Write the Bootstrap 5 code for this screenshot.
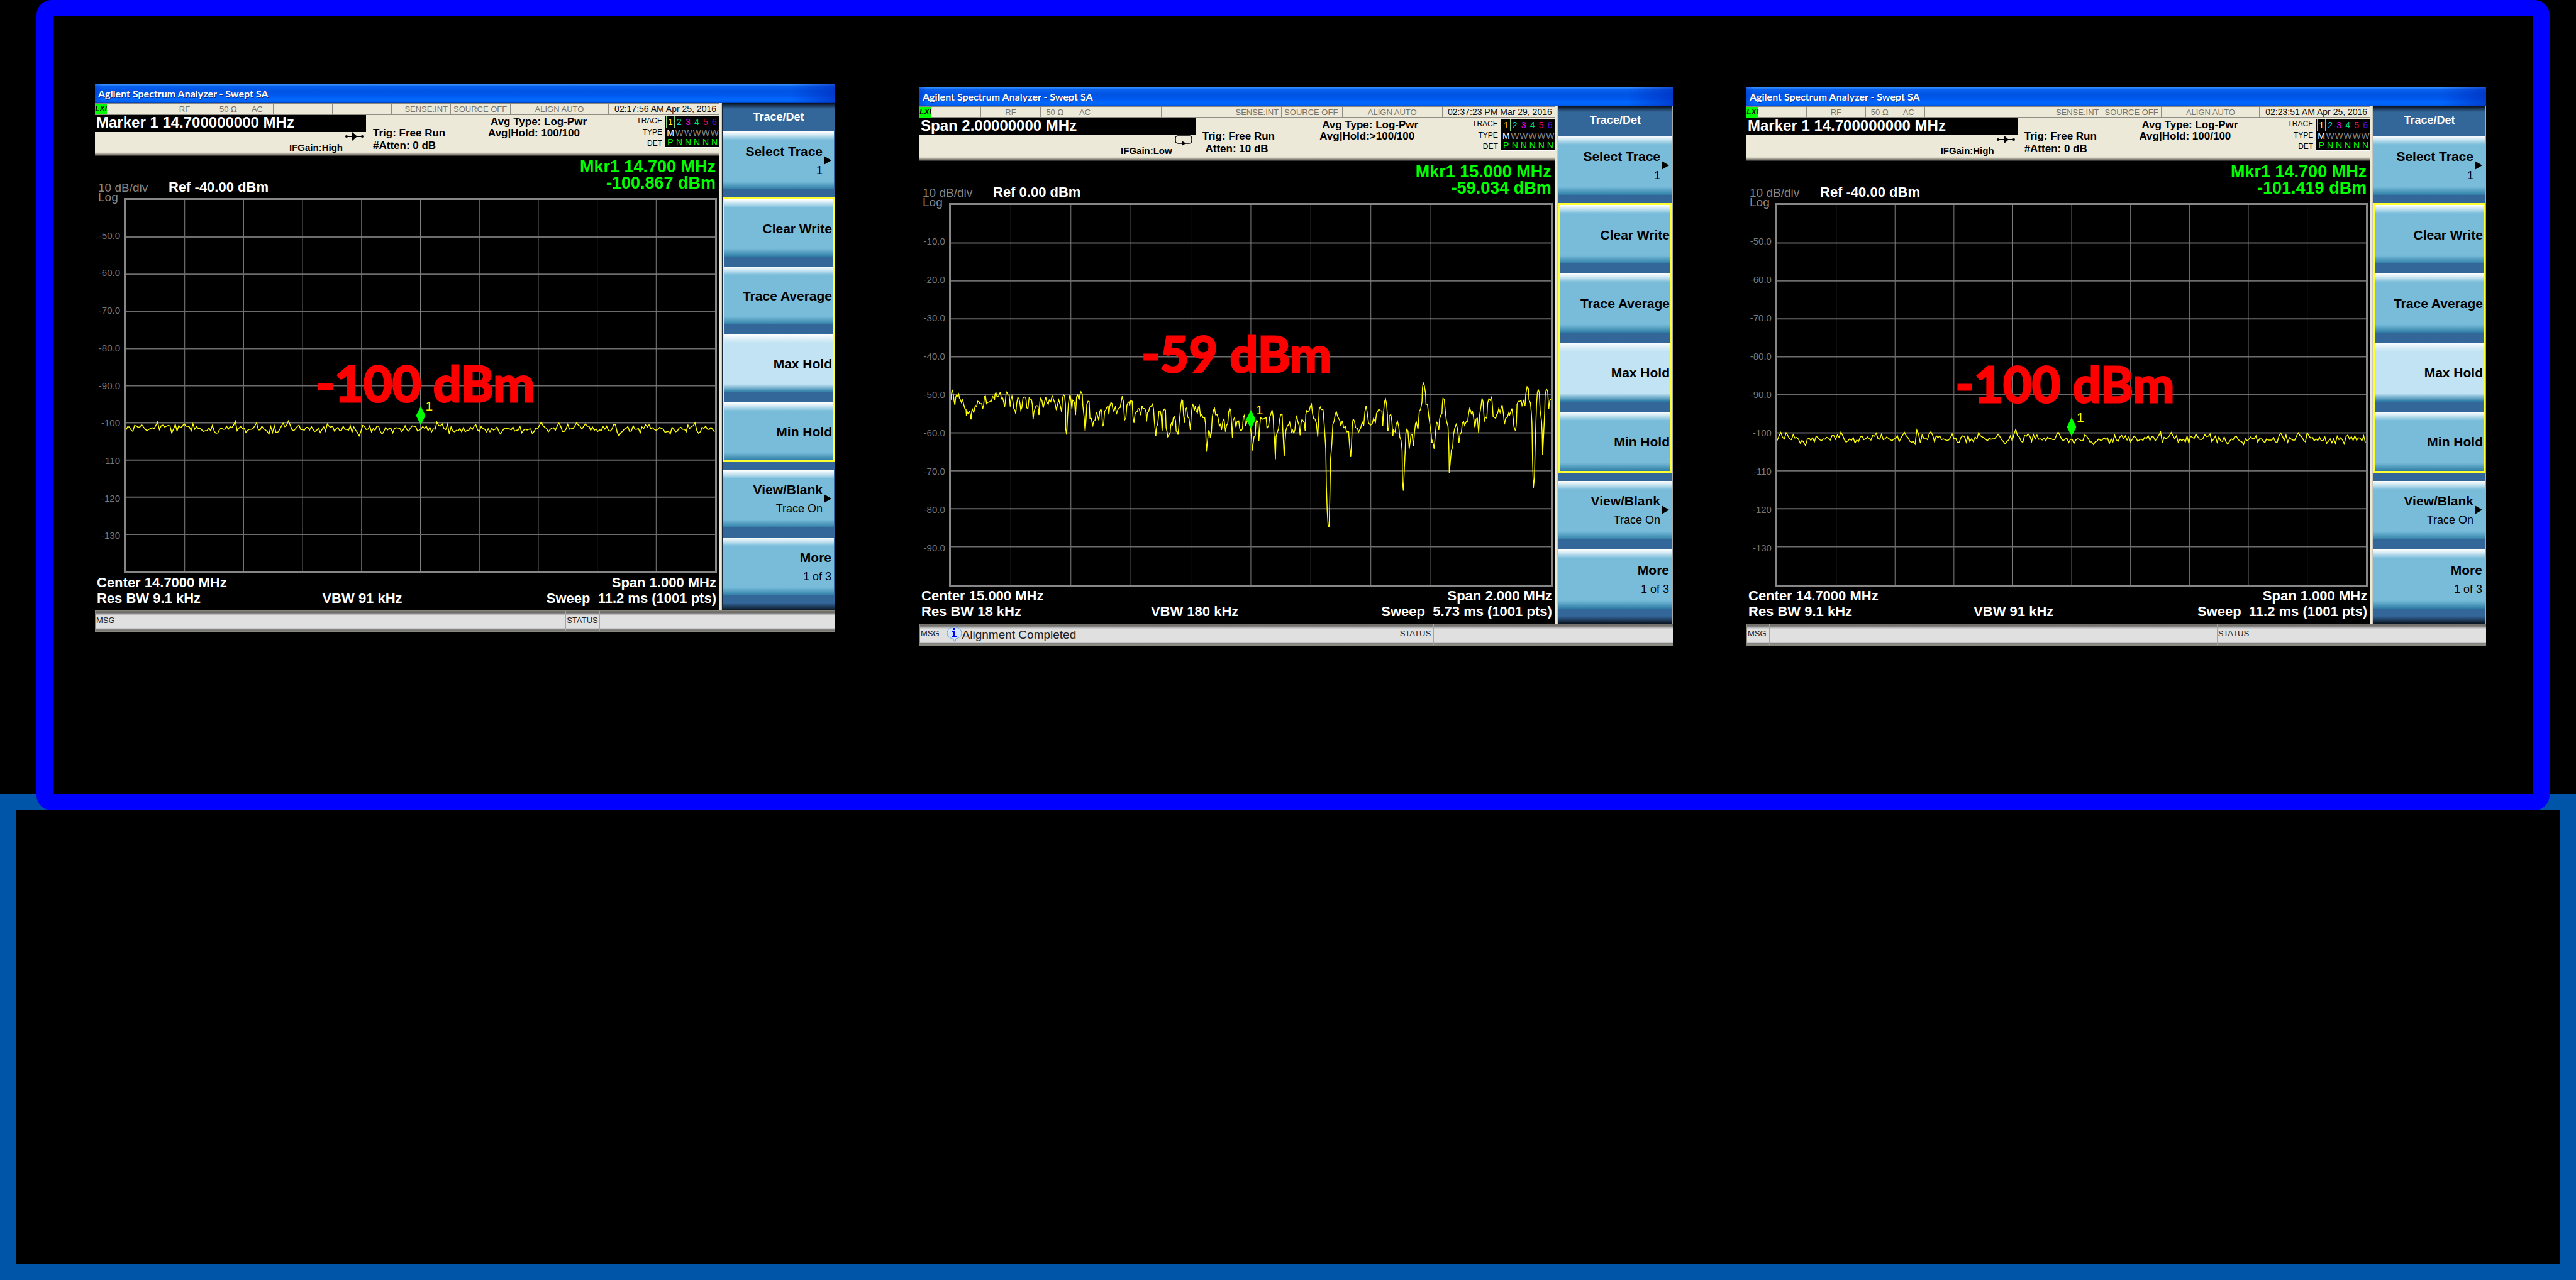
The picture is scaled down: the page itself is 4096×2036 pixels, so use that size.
<!DOCTYPE html>
<html lang="en">
<head>
<meta charset="utf-8">
<meta name="viewport" content="width=device-width, initial-scale=1">
<title>Spectrum Analyzer - Swept SA</title>
<link href="https://cdn.jsdelivr.net/npm/bootstrap@5.3.0/dist/css/bootstrap.min.css" rel="stylesheet">
<style>
  body { background: #000; font-family: "Liberation Sans", Arial, sans-serif; color: #fff; }
  .upper-frame { border: 26px solid #00f; border-radius: 24px; margin: 0 42px 0 58px; padding: 108px 0 236px; z-index: 1; }
  .lower-frame { border: 26px solid #0055a8; margin-top: -26px; }
  .screens { display: grid; grid-template-columns: 67fr 1177fr 134fr 1198fr 117fr 1176fr 75fr; align-items: start; }
  .screens > :nth-child(1) { grid-column: 2; }
  .screens > :nth-child(2) { grid-column: 4; margin-top: 5px; }
  .screens > :nth-child(3) { grid-column: 6; margin-top: 5px; }

  .titlebar { height: 30px; padding-left: 5px; font: 700 16px/29px Lato, sans-serif; text-shadow: 1px 1px 0 #0a2a80;
    background: linear-gradient(90deg, #0030c860 0, transparent 1%, transparent 94%, #0028b8a0 100%),
      linear-gradient(#3d95ff 0, #0a63f0 10%, #0054e3 35%, #0058ee 60%, #0069ff 80%, #0060f0 94%, #003db8 100%); }
  .inst-body { display: grid; grid-template-columns: 992fr 5px 180fr; }
  .divider { background: linear-gradient(90deg, #ece9d8 60%, #fff 60%, #b8b4a4 100%); }

  .inforow { display: grid; grid-template-columns: 95fr 94fr 94fr 94fr 94fr 94fr 95fr 156fr 176fr; height: 19px; background: #ece9d8;
    border-top: 1px solid #8a887c; border-bottom: 2px solid #8f8d84; color: #77756c; font-size: 13px; line-height: 17px; white-space: nowrap; }
  .inforow > div + div { border-left: 1px solid #8f8d84; }
  .lxi { width: 19px; background: #0f0; color: #000; font-style: italic; font-weight: 700; font-size: 12px; text-align: center; }
  .clock { color: #111; font-size: 14px; }

  .setup { display: grid; grid-template-columns: 431fr 194fr 367fr; height: 65px; font-weight: 700; font-size: 17px; line-height: 20px; color: #000; white-space: nowrap;
    background: linear-gradient(#ece9d8 0, #ece9d8 91%, #a9a698 95%, #222 100%); }
  .tall .setup { height: 68px; }
  .active-fn { height: 27px; padding-left: 2px; background: #000; color: #fff; font-size: 24px; line-height: 24px; }
  .ifgain { font-size: 15px; line-height: 18px; }
  .trig { padding: 19px 0 0 11px; }
  .avg { padding: 2px 0 0 4px; line-height: 18px; }
  .avg div + div { margin-left: -4px; }
  .tlabels { font-size: 12px; font-weight: 400; line-height: 18px; padding: 0 4px 0 0; }
  .tgrid { width: 86px; height: 51px; margin-top: 1px; padding-left: 1px; background: #000; border-bottom: 1px solid #fff; border-left: 1px solid #8f8d84;
    display: grid; grid-template-columns: repeat(6, 1fr); grid-template-rows: 20px 15px 15px; font-size: 14px; font-weight: 400; line-height: 15px; text-align: center; }
  .tgrid > :nth-child(-n+6) { line-height: 20px; }
  .tgrid .on { box-shadow: inset 0 0 0 1px #7fd67f; }
  .tgrid .off { color: #8a8a8a; font-size: 14px; text-decoration: line-through; }
  .tgrid .det { color: #0f0; }

  .readout { height: 67px; padding: 4px 5px 0; white-space: nowrap; }
  .mkr { color: #0f0; font-weight: 700; font-size: 27px; line-height: 26px; }
  .scale-lbl { color: #868686; font-size: 19px; line-height: 20px; padding-top: 37px; width: 114px; }
  .ref-lbl { font-weight: 700; font-size: 22px; line-height: 22px; padding-top: 35px; margin-left: -2px; }

  .plot { display: grid; grid-template-columns: 46fr 943fr 3fr; height: 597px; }
  .tall .plot { height: 610px; }
  .axis { display: grid; grid-template-rows: repeat(10, 1fr); color: #777; font-size: 15px; line-height: 18px; text-align: right; padding-right: 6px; }
  .axis span { align-self: end; margin-bottom: -9px; }
  .log { left: 5px; top: -11px; font-size: 19px; line-height: 20px; color: #868686; }
  .graph { border: 3px solid #868686; }
  .graph svg.layer { left: 0; top: 0; width: 100%; height: 100%; }
  .marker { left: 50%; transform: translate(-50%, -100%); }
  .marker-no { left: 50%; margin-left: 8px; color: #ff0; font-size: 21px; line-height: 20px; transform: translateY(-200%); }
  .callout { color: #f00; font: 700 79px/80px Lato, sans-serif; -webkit-text-stroke: 3px #f00; white-space: nowrap; transform: translateY(-50%); }

  .foot { height: 59px; padding: 2px 4px 0 3px; font-weight: 700; font-size: 22px; line-height: 26px; display: grid; grid-template-columns: 361fr 631fr; grid-auto-rows: 25px; white-space: nowrap; }

  .keys { background: linear-gradient(#0a1420 0, #336699 9px, #336699 calc(100% - 12px), #0a1420 100%); border-right: 1px solid #aaa; border-left: 1px solid #123; }
  .keys h2 { height: 45px; margin: 0; font-size: 18px; line-height: 44px; font-weight: 700; text-align: center; }
  .tall .keys h2 { height: 47px; }
  .keygrid { display: grid; grid-template-rows: repeat(7, 1fr); gap: 16px; padding: 0 1px 24px 0; }
  .keygroup { grid-row: span 4; display: grid; grid-template-rows: repeat(4, 1fr); gap: 16px; margin: 0 2px 0 3px; outline: 3px solid #ffff32; }
  .softkey { border: 0; padding: 2px 4px 0; color: #000; text-align: right; line-height: 30px; font-size: 18px; white-space: nowrap;
    background: linear-gradient(#fff 0, #d8ecf5 5%, #78bcda 15%, #78bcda 86%, #3a88ae 98%, #2c7aa4 100%); }
  .keygroup .softkey { padding: 2px 1px 0; }
  .softkey b { display: block; font-size: 21px; }
  .softkey.sub { padding-right: 18px; }
  .softkey.sel { background: linear-gradient(#fff 0, #e6f3fa 5%, #c2e3f3 15%, #c2e3f3 86%, #3a88ae 98%, #2c7aa4 100%); }
  .softkey svg { right: 4px; top: 50%; transform: translateY(-50%); }

  .msgbar { display: grid; grid-template-columns: 35fr 713fr 54fr 375fr; height: 34px; color: #222; font-size: 13px; line-height: 30px;
    background: linear-gradient(#77746a 0, #6e6e6e 8%, #e0e0e0 22%, #e0e0e0 84%, #707070 94%, #98958a 100%); border: 1px solid #8a887c; border-right: 0; white-space: nowrap; }
  .tall .msgbar { height: 35px; }
  .msgbar > div + div { border-left: 1px solid #a8a596; }
  .msgbar > div { padding-left: 1px; }
  .msgtext { font-size: 19px; line-height: 30px; }
</style>
</head>
<body>
<div class="d-flex flex-column min-vh-100">
  <main class="upper-frame position-relative">
    <div class="screens" id="screens"></div>
  </main>
  <section class="lower-frame flex-grow-1"></section>
</div>

<script>
const sweep2 = "168,365 170,320 174,277 179,310 183,370 187,405 191,340 196,320 200,330 205,312 209,350 214,365 218,385 224,362 229,400 234,435 240,445 242,498 246,465 250,480 256,462 260,480 264,530 267,465 270,442 277,472 282,430 285,410 290,420 296,375 302,380 306,395 315,395 320,437 324,410 328,335 333,332 338,395 344,383 350,383 356,375 359,380 363,360 367,335 371,340 376,362 379,310 383,302 387,332 395,337 400,305 404,302 409,355 415,348 420,385 424,425 428,370 432,294 436,300 440,322 446,325 451,420 455,350 459,333 463,370 468,440 473,450 477,480 482,390 487,345 492,350 497,390 501,450 506,430 512,345 517,338 525,342 530,430 535,437 541,345 546,357 552,362 556,400 560,528 564,465 570,430 575,412 583,415 588,492 592,380 596,350 602,370 608,430 614,385 620,340 625,380 632,400 637,365 644,380 649,340 653,332 658,365 664,390 671,450 676,405 682,362 688,400 696,467 700,350 705,320 710,330 714,400 716,620 720,660 724,510 728,400 733,340 736,320 740,360 745,437 748,365 753,372 758,395 762,493 767,340 772,320 779,362 784,310 788,294 794,310 797,410 803,510 808,628 812,540 816,400 822,375 827,378 831,520 838,522 844,590 848,545 855,540 861,472 866,490 873,537 878,460 883,442 887,460 891,585 896,575 901,460 906,450 912,425 917,418 921,487 925,420 931,386 936,395 940,440 945,462 953,418 957,487 963,450 968,435 975,428 980,380 985,332 990,375 996,535 1002,520 1007,410 1013,383 1017,380 1020,410 1025,370 1032,375 1036,510 1041,560 1046,480 1052,468 1057,460 1061,437 1066,440 1073,493 1079,412 1084,437 1092,437 1098,465 1101,548 1105,470 1110,467 1116,425 1122,418 1129,400 1134,440 1138,550 1145,670 1149,590 1154,570 1160,460 1166,458 1171,500 1175,628 1180,460 1186,442 1191,450 1194,600 1199,640 1202,677 1208,660 1213,645 1216,580 1220,560 1224,575 1228,520 1233,505 1239,540 1242,630 1247,635 1251,660 1255,580 1260,490 1265,400 1269,362 1273,370 1277,490 1282,560 1287,440 1292,432 1297,510 1303,520 1310,620 1314,480 1320,400 1324,410 1328,455 1333,418 1338,460 1343,475 1347,430 1352,412 1358,500 1364,487 1370,515 1378,515 1382,570 1386,805 1392,700 1396,628 1402,640 1405,690 1410,640 1414,510 1420,450 1425,435 1430,490 1438,490 1443,530 1448,590 1453,565 1458,620 1464,550 1470,527 1477,635 1482,580 1488,565 1492,470 1497,437 1502,450 1510,685 1513,540 1520,515 1527,595 1532,550 1540,542 1545,610 1551,628 1558,610 1562,510 1567,495";
const sweep2b = "36,585 44,540 55,560 60,610 64,680 68,795 72,735 76,680 82,665 85,560 89,537 95,555 97,640 99,715 103,600 107,515 118,528 134,515 138,605 146,580 150,515 156,487 162,450 167,500 171,650 174,710 178,870 181,680 187,640 193,610 198,535 203,490 210,487 214,640 220,845 224,720 228,625 234,590 240,575 246,553 251,600 255,645 260,620 266,647 271,620 275,540 279,497 285,550 291,580 296,665 300,560 305,530 311,545 316,560 320,628 323,490 327,455 333,465 340,450 345,415 350,400 355,480 360,520 367,527 373,560 380,677 384,540 387,440 392,424 397,445 405,448 409,530 414,660 418,780 421,1095 425,1310 429,1430 434,1450 437,1240 441,870 447,740 452,570 458,545 464,480 469,467 474,500 479,520 485,540 490,585 497,540 503,600 512,590 517,635 527,635 531,740 537,850 541,740 545,560 549,528 555,545 560,600 568,605 575,635 584,605 592,553 599,585 605,460 611,412 617,490 622,560 631,578 640,565 646,522 655,553 660,480 666,460 671,443 678,455 686,458 690,583 694,460 698,380 703,357 708,400 712,490 714,628 719,600 721,500 728,487 733,540 738,670 741,620 749,635 754,570 760,547 766,590 771,680 777,710 782,790 784,1065 788,1138 793,940 797,790 800,650 804,615 810,628 816,780 822,700 825,655 830,660 836,757 841,640 846,565 850,553 858,615 864,460 870,445 877,380 879,260 883,215 888,240 894,310 896,400 903,400 909,500 916,590 921,660 923,730 927,710 935,780 941,650 946,553 951,565 957,620 961,525 966,495 972,480 974,400 977,350 983,360 988,460 993,540 1001,590 1005,770 1007,985 1012,890 1017,790 1023,770 1027,660 1033,605 1040,572 1046,605 1053,730 1058,660 1065,635 1069,560 1075,547 1080,580 1088,550 1095,545 1099,480 1104,437 1109,455 1113,487 1117,458 1122,500 1129,597 1135,525 1141,520 1147,645 1152,490 1158,420 1163,350 1168,380 1174,548 1179,510 1186,520 1190,390 1196,352 1202,367 1209,340 1213,420 1216,505 1228,520 1233,490 1237,480 1243,437 1249,470 1253,440 1259,406 1265,480 1270,572 1276,520 1284,510 1291,470 1295,490 1306,437 1311,510 1315,590 1323,630 1327,560 1330,400 1336,375 1343,378 1349,365 1354,410 1361,372 1368,412 1372,310 1378,252 1384,265 1387,365 1394,390 1398,470 1401,560 1404,880 1408,1113 1413,1030 1416,790 1419,610 1423,400 1427,300 1431,277 1436,300 1440,450 1447,550 1450,660 1452,830 1457,650 1462,460 1464,320 1470,270 1476,290 1481,443 1486,370 1491,355";

// Noise floor around -101.5 dBm with the measured peaks and dips placed on it; 100 units = 10 dB below -40.
function floorTrace(seed, mean, spikes) {
  let s = seed, pts = [];
  const rnd = () => (s = (s * 16807) % 2147483647) / 2147483647;
  for (let x = 0; x <= 1000; x += 3) {
    let db = mean + (rnd() + rnd() - 1) * 1.4;
    for (const [px, pdb] of spikes) {
      const d = Math.abs(x - px);
      if (d < 2) db = pdb; else if (d < 4) db = pdb * 0.5 + mean * 0.5;
    }
    pts.push(x + "," + Math.round((-40 - db) * 10));
  }
  return pts.join(" ");
}

const screens = [
  { cls: "", fn: "Marker 1 14.700000000 MHz", gain: "IFGain:High", atten: "#Atten: 0 dB", hold: "Avg|Hold: 100/100",
    clock: "02:17:56 AM Apr 25, 2016", mkr: "Mkr1 14.700 MHz", level: "-100.867 dBm", ref: "Ref -40.00 dBm",
    axis: ["-50.0","-60.0","-70.0","-80.0","-90.0","-100","-110","-120","-130"], callout: "-100 dBm", cx: 32.3, cy: 49.2, tip: 60.5,
    center: "Center 14.7000 MHz", span: "Span 1.000 MHz", rbw: "Res BW 9.1 kHz", vbw: "VBW 91 kHz", sweep: "Sweep&nbsp; 11.2 ms (1001 pts)", msg: "", fast: true,
    box: "0 0 1000 1000", trace: floorTrace(4711, -101.6, [[27,-100.5],[53,-99.8],[64,-100.6],[99,-100.2],[185,-99.6],[221,-100],[242,-103],[266,-100.1],[276,-99.5],[343,-100.3],[395,-103.5],[435,-103],[529,-99.8],[635,-103],[691,-102.9],[705,-99.8],[735,-100.1],[764,-100],[780,-100.3],[837,-103.5],[883,-100.5],[923,-103],[965,-100]]) },
  { cls: "tall", fn: "Span 2.00000000 MHz", gain: "IFGain:Low", atten: "&nbsp;Atten: 10 dB", hold: "Avg|Hold:&gt;100/100",
    clock: "02:37:23 PM Mar 29, 2016", mkr: "Mkr1 15.000 MHz", level: "-59.034 dBm", ref: "Ref 0.00 dBm",
    axis: ["-10.0","-20.0","-30.0","-40.0","-50.0","-60.0","-70.0","-80.0","-90.0"], callout: "-59 dBm", cx: 31.8, cy: 39, tip: 59,
    center: "Center 15.000 MHz", span: "Span 2.000 MHz", rbw: "Res BW 18 kHz", vbw: "VBW 180 kHz", sweep: "Sweep&nbsp; 5.73 ms (1001 pts)", msg: "Alignment Completed", fast: false,
    box: "168 -1300 2860 3240", trace: sweep2 + " " + sweep2b.split(" ").map(p => { const [x, y] = p.split(","); return (+x + 1537) + "," + y; }).join(" ") },
  { cls: "tall", fn: "Marker 1 14.700000000 MHz", gain: "IFGain:High", atten: "#Atten: 0 dB", hold: "Avg|Hold: 100/100",
    clock: "02:23:51 AM Apr 25, 2016", mkr: "Mkr1 14.700 MHz", level: "-101.419 dBm", ref: "Ref -40.00 dBm",
    axis: ["-50.0","-60.0","-70.0","-80.0","-90.0","-100","-110","-120","-130"], callout: "-100 dBm", cx: 30.3, cy: 47, tip: 61,
    center: "Center 14.7000 MHz", span: "Span 1.000 MHz", rbw: "Res BW 9.1 kHz", vbw: "VBW 91 kHz", sweep: "Sweep&nbsp; 11.2 ms (1001 pts)", msg: "", fast: true,
    box: "0 0 1000 1000", trace: floorTrace(90210, -101.6, [[5,-99.9],[16,-100],[47,-103.4],[109,-99.8],[167,-100.1],[217,-99.9],[234,-103],[238,-99.3],[262,-99.7],[343,-100],[375,-100.4],[387,-102.9],[404,-99.1],[426,-100.3],[477,-99.8],[537,-103.1],[650,-99.8],[669,-99.9],[712,-100.4],[765,-103],[791,-103.1],[855,-100.1],[885,-100],[901,-100]]) }
];

const gridLines = [1,2,3,4,5,6,7,8,9].map(i => `<path d="M${i} 0V10" stroke="#808080" stroke-width="1"/><path d="M0 ${i}H10" stroke="#6c6c6c" stroke-width="2"/>`).join("").replaceAll("<path", '<path vector-effect="non-scaling-stroke"');
const traceCells = [["1","#ff0"],["2","#0dd"],["3","#d0d"],["4","#0d7"],["5","#e0105a"],["6","#5a10e0"]].map(([n, c], i) => `<span style="color:${c}"${i ? "" : ' class="on"'}>${n}</span>`).join("");
const arrow = '<svg class="position-absolute" width="11" height="13" viewBox="0 0 11 13" aria-hidden="true"><path d="M0 0L11 6.5L0 13Z"/></svg>';
const sweepIcon = fast => fast
  ? '<svg width="29" height="14" viewBox="0 0 29 14" aria-hidden="true"><path d="M2 7H27" stroke="#000" stroke-width="2"/><circle cx="2" cy="7" r="2"/><circle cx="27" cy="7" r="2"/><path d="M11 0L19 7L11 14Z"/></svg>'
  : '<svg width="29" height="17" viewBox="0 0 29 17" aria-hidden="true"><rect x="1" y="1" width="26" height="12" rx="4" fill="none" stroke="#000" stroke-width="1.5"/><path d="M11 9L18 13L11 17Z"/></svg>';
const info = '<svg width="25" height="25" viewBox="0 0 25 25" class="ms-1 flex-shrink-0" aria-hidden="true"><path d="M12.5 1C5 1 1 5 1 10S5 18 10 19L13.5 24L15 19C20 18 24 15 24 10S20 1 12.5 1Z" fill="#d3e6fb" stroke="#6f9dce"/><path d="M9 7H14V15H16V17H9V15H11V9H9Z" fill="#00f"/><rect x="11" y="2" width="3" height="3" fill="#00f"/></svg>';

document.getElementById("screens").innerHTML = screens.map(s => `
<article class="${s.cls}">
  <div class="titlebar">Agilent Spectrum Analyzer - Swept SA</div>
  <div class="inst-body">
    <div class="d-flex flex-column">
      <div class="inforow">
        <div><div class="lxi">LXI</div></div><div class="text-center">RF</div>
        <div class="d-flex justify-content-between ps-2 pe-3"><span>50 Ω</span><span>AC</span></div>
        <div></div><div></div><div class="text-end pe-1">SENSE:INT</div><div class="ps-1">SOURCE OFF</div>
        <div class="text-center">ALIGN AUTO</div><div class="text-end pe-1 clock">${s.clock}</div>
      </div>
      <div class="setup">
        <div>
          <div class="active-fn">${s.fn}</div>
          <div class="d-flex justify-content-end pe-1"><span class="ifgain pt-3">${s.gain}</span><span class="ms-1 d-flex">${sweepIcon(s.fast)}</span></div>
        </div>
        <div class="trig"><div>Trig: Free Run</div><div>${s.atten}</div></div>
        <div class="d-flex justify-content-between">
          <div class="avg"><div>Avg Type: Log-Pwr</div><div>${s.hold}</div></div>
          <div class="d-flex">
            <div class="tlabels text-end"><div>TRACE</div><div>TYPE</div><div>DET</div></div>
            <div class="tgrid">${traceCells}<span class="text-white">M</span>${'<span class="off">W</span>'.repeat(5)}<span class="det">P</span>${'<span class="det">N</span>'.repeat(5)}</div>
          </div>
        </div>
      </div>
      <div class="readout d-flex">
        <div class="scale-lbl">10 dB/div</div><div class="ref-lbl">${s.ref}</div>
        <div class="mkr text-end ms-auto"><div>${s.mkr}</div><div>${s.level}</div></div>
      </div>
      <div class="plot">
        <div class="axis position-relative"><div class="log position-absolute">Log</div>${s.axis.map(a => `<span>${a}</span>`).join("")}</div>
        <div class="graph position-relative">
          <svg class="layer position-absolute" viewBox="0 0 10 10" preserveAspectRatio="none">${gridLines}</svg>
          <svg class="layer position-absolute" viewBox="${s.box}" preserveAspectRatio="none"><polyline points="${s.trace}" fill="none" stroke="#ff0" stroke-width="1.5" vector-effect="non-scaling-stroke"/></svg>
          <svg class="marker position-absolute" style="top:${s.tip}%" width="15" height="30" viewBox="0 0 15 30"><path d="M7.5 0L15 15L7.5 30L0 15Z" fill="#0f0"/></svg>
          <div class="marker-no position-absolute" style="top:${s.tip}%">1</div>
          <div class="callout position-absolute" style="left:${s.cx}%;top:${s.cy}%">${s.callout}</div>
        </div>
      </div>
      <div class="foot">
        <div>${s.center}</div><div class="text-end">${s.span}</div>
        <div>${s.rbw}</div><div class="d-flex justify-content-between"><span>${s.vbw}</span><span>${s.sweep}</span></div>
      </div>
    </div>
    <div class="divider"></div>
    <nav class="keys d-flex flex-column" aria-label="Softkeys">
      <h2>Trace/Det</h2>
      <div class="keygrid flex-grow-1">
        <button type="button" class="softkey sub position-relative"><b>Select Trace</b>1${arrow}</button>
        <div class="keygroup">
          <button type="button" class="softkey"><b>Clear Write</b></button>
          <button type="button" class="softkey"><b>Trace Average</b></button>
          <button type="button" class="softkey sel"><b>Max Hold</b></button>
          <button type="button" class="softkey"><b>Min Hold</b></button>
        </div>
        <button type="button" class="softkey sub position-relative"><b>View/Blank</b>Trace On${arrow}</button>
        <button type="button" class="softkey"><b>More</b>1 of 3</button>
      </div>
    </nav>
  </div>
  <div class="msgbar"><div>MSG</div><div class="msgtext d-flex align-items-center">${s.msg ? info + s.msg : ""}</div><div>STATUS</div><div></div></div>
</article>`).join("");
</script>
<script src="https://cdn.jsdelivr.net/npm/bootstrap@5.3.0/dist/js/bootstrap.bundle.min.js"></script>
</body>
</html>
